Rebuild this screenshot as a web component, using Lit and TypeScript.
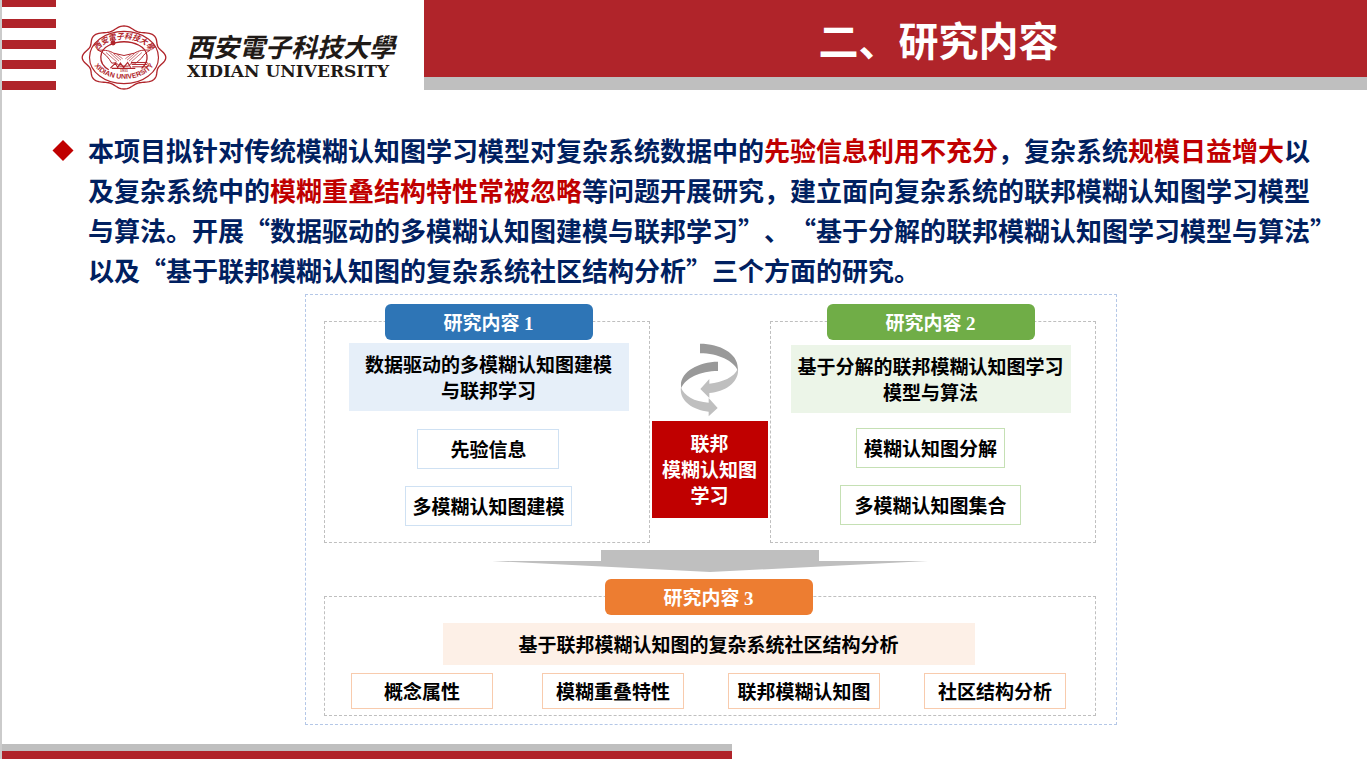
import { LitElement, html, css } from "lit";
import { customElement, property } from "lit/decorators.js";

const CJK = css`"Noto Sans CJK SC", sans-serif`;

/** Eight-lobed outline of the university seal. */
function sealOutline(cx: number, cy: number, rx: number, ry: number): string {
  const points: string[] = [];
  for (let i = 0; i < 160; i++) {
    const a = (i / 160) * Math.PI * 2;
    const f = 0.94 + 0.06 * Math.cos(8 * a);
    points.push(`${(cx + rx * f * Math.cos(a)).toFixed(1)} ${(cy + ry * f * Math.sin(a)).toFixed(1)}`);
  }
  return `M${points.join("L")}Z`;
}

@customElement("university-logo")
export class UniversityLogo extends LitElement {
  static styles = css`
    :host {
      display: flex;
      align-items: flex-end;
      gap: 20px;
    }
    .seal {
      width: 86px;
      height: 65px;
      flex: none;
    }
    .seal-cn {
      font: italic 700 23px ${CJK};
      fill: #b0242a;
    }
    .seal-en {
      font: 700 21px "Liberation Sans", sans-serif;
      fill: #b0242a;
    }
    .seal-year {
      font: 700 12px "Liberation Serif", serif;
      fill: #b0242a;
    }
    .names {
      display: flex;
      flex-direction: column;
      padding-bottom: 10px;
      color: #1f1a17;
      white-space: nowrap;
    }
    .cn {
      font: italic 700 26px/32px ${CJK};
    }
    .en {
      font: 700 17px/18px "DejaVu Serif", serif;
    }
  `;

  render() {
    return html`
      <svg class="seal" viewBox="242 75 258 196" role="img" aria-label="西安电子科技大学校徽">
        <g fill="none" stroke="#b0242a" stroke-width="4">
          <path d=${sealOutline(371, 173, 126, 95)} />
          <ellipse cx="371" cy="173" rx="104" ry="79" stroke-width="3.5" />
          <path d="M325 210C290 190 296 150 326 136C352 122 390 122 416 136C444 150 450 182 424 206" stroke-width="4" />
          <path d="M293 151C315 150 329 153 340 160L371 167L402 160C414 152 430 149 450 151C438 157 430 165 424 175L407 190L395 189L384 199H358L347 189L334 190C326 175 312 158 293 151Z" stroke-width="3" />
          <path d="M317 158L349 186M327 157L356 184M339 161L362 181M349 163L367 177M425 158L393 186M415 157L386 184M403 161L380 181M393 163L375 177" stroke-width="2" />
          <path d="M330 205L345 190L352 203L360 190L370 203L382 188L391 203M334 206H405" stroke-width="3.5" />
          <path d="M392 188H440M394 194H440M396 201H442M438 186C446 191 446 199 439 204" stroke-width="3" />
        </g>
        <circle cx="338" cy="129" r="7.5" fill="#b0242a" />
        <defs>
          <path id="upper" d="M286 174A85 57 0 0 1 456 174" />
          <path id="lower" d="M274 180A98 67 0 0 0 468 180" />
        </defs>
        <text class="seal-cn"><textPath href="#upper" startOffset="50%" text-anchor="middle">西安電子科技大學</textPath></text>
        <text class="seal-en"><textPath href="#lower" startOffset="50%" text-anchor="middle">XIDIAN UNIVERSITY</textPath></text>
        <text class="seal-year" x="371" y="218" text-anchor="middle">1931</text>
      </svg>
      <div class="names">
        <span class="cn">西安電子科技大學</span>
        <span class="en">XIDIAN UNIVERSITY</span>
      </div>
    `;
  }
}

@customElement("research-panel")
export class ResearchPanel extends LitElement {
  @property() number = "";
  @property({ attribute: false }) summary: string[] = [];
  @property({ attribute: false }) topics: string[] = [];

  static styles = css`
    :host {
      display: flex;
      flex-direction: column;
      align-items: center;
      box-sizing: border-box;
      border: 1px dashed #bfbfbf;
      color: #000;
      font: 700 19px/26px ${CJK};
      text-align: center;
      white-space: nowrap;
    }
    .tab {
      box-sizing: border-box;
      width: 208px;
      margin: -18px 0 0;
      padding: 5px 0;
      border-radius: 6px;
      background: var(--accent);
      color: #fff;
      font: inherit;
    }
    .digit {
      font-family: "Liberation Serif", serif;
      line-height: 1;
    }
    .summary {
      box-sizing: border-box;
      width: var(--summary-width, 280px);
      margin: var(--summary-gap) 0 var(--topics-gap);
      padding: 8px 0;
      background: var(--tint);
    }
    .topics {
      display: flex;
      flex-direction: column;
      align-items: center;
      gap: 17px;
      margin: 0;
      padding: 0;
      list-style: none;
    }
    .topic {
      box-sizing: border-box;
      min-width: 142px;
      padding: 6px;
      border: 1px solid var(--line);
    }
    :host([wide]) .topics {
      display: grid;
      grid-template-columns: repeat(4, 1fr);
      justify-items: center;
      align-self: stretch;
      gap: 0;
    }
    :host([wide]) .topic {
      padding: 4px 8px;
    }
    :host([roomy]) .topic {
      padding: 6px 7px;
    }
    :host([roomy]) .topic:last-child {
      padding: 6px 13px;
    }
  `;

  render() {
    return html`
      <h2 class="tab">研究内容 <span class="digit">${this.number}</span></h2>
      <div class="summary">${this.summary.map((line) => html`<div>${line}</div>`)}</div>
      <ul class="topics">
        ${this.topics.map((topic) => html`<li class="topic">${topic}</li>`)}
      </ul>
    `;
  }
}

@customElement("app-root")
export class AppRoot extends LitElement {
  static styles = css`
    :host {
      display: flex;
      flex-direction: column;
      box-sizing: border-box;
      min-height: 100vh;
      border-left: 2px solid #cbcbcb;
      background: #fff;
      font-family: ${CJK};
    }
    .header {
      display: grid;
      grid-template-columns: 422px 1fr;
      height: 90px;
    }
    .brand {
      display: flex;
      align-items: flex-end;
      gap: 25px;
    }
    .stripes {
      display: flex;
      flex-direction: column;
      justify-content: space-between;
      align-self: stretch;
      width: 54px;
    }
    .stripe {
      height: 9px;
      background: #b0242a;
    }
    .stripe:first-child {
      height: 7px;
    }
    .banner {
      box-sizing: border-box;
      border-bottom: 13px solid #bfbfbf;
      padding: 11px 0 0 86px;
      background: #b0242a;
    }
    .title {
      margin: 0;
      color: #fff;
      font: 700 40px/56px ${CJK};
      text-align: center;
    }
    .main {
      flex: 1;
      padding: 40px 0 19px;
    }
    .intro {
      display: flex;
      gap: 14px;
      padding-left: 50px;
    }
    .bullet {
      flex: none;
      width: 22px;
      height: 40px;
      fill: #c00000;
    }
    .statement {
      margin: 0;
      color: #002060;
      font: 700 26px/40px ${CJK};
      text-spacing-trim: space-all;
      white-space: nowrap;
    }
    .line {
      display: block;
    }
    .hot {
      color: #c00000;
    }
    .diagram {
      display: flex;
      flex-direction: column;
      box-sizing: border-box;
      max-width: 812px;
      margin: 4px auto 0;
      padding: 26px 20px 8px 18px;
      border: 1px dashed #b4c7e7;
    }
    .stage {
      padding-left: 52px;
    }
    .row {
      display: grid;
      grid-template-columns: 1fr 120px 1fr;
    }
    .first {
      --accent: #2e75b6;
      --tint: #e6eff9;
      --line: #cfe1f3;
      --summary-gap: 3px;
      --topics-gap: 18px;
      padding: 0 0 16px 4px;
    }
    .second {
      --accent: #70ad47;
      --tint: #ecf5e8;
      --line: #c5e0b4;
      --summary-gap: 5px;
      --topics-gap: 15px;
      padding: 0 4px 16px 0;
    }
    .third {
      --accent: #ed7d31;
      --tint: #fdf0e7;
      --line: #f8cbad;
      --summary-gap: 8px;
      --topics-gap: 8px;
      --summary-width: 532px;
      margin-top: 24px;
      padding: 0 4px 6px 2px;
    }
    .hub {
      display: flex;
      flex-direction: column;
      align-items: center;
      gap: 4px;
      padding-top: 22px;
    }
    .cycle {
      width: 59px;
      height: 74px;
    }
    .core {
      box-sizing: border-box;
      width: 116px;
      padding: 9px 0 10px;
      background: #c00000;
      color: #fff;
      font: 700 19px/26px ${CJK};
      text-align: center;
    }
    .down {
      align-self: center;
      width: 436px;
      height: 22px;
      margin-top: 7px;
      fill: #bfbfbf;
    }
    .footer {
      width: 730px;
      max-width: 100%;
      height: 8px;
      border-top: 7px solid #bfbfbf;
      background: #b0242a;
    }
  `;

  render() {
    return html`
      <header class="header">
        <div class="brand">
          <div class="stripes">${[0, 1, 2, 3, 4].map(() => html`<div class="stripe"></div>`)}</div>
          <university-logo></university-logo>
        </div>
        <div class="banner"><h1 class="title">二、研究内容</h1></div>
      </header>
      <main class="main">
        <div class="intro">
          <svg class="bullet" viewBox="0 0 22 40" aria-hidden="true"><path d="M11 10L21.5 20.5L11 31L0.5 20.5Z" /></svg>
          <p class="statement">
            <span class="line">本项目拟针对传统模糊认知图学习模型对复杂系统数据中的<span class="hot">先验信息利用不充分</span>，复杂系统<span class="hot">规模日益增大</span>以</span>
            <span class="line">及复杂系统中的<span class="hot">模糊重叠结构特性常被忽略</span>等问题开展研究，建立面向复杂系统的联邦模糊认知图学习模型</span>
            <span class="line">与算法。开展“数据驱动的多模糊认知图建模与联邦学习”、“基于分解的联邦模糊认知图学习模型与算法”</span>
            <span class="line">以及“基于联邦模糊认知图的复杂系统社区结构分析”三个方面的研究。</span>
          </p>
        </div>
        <div class="stage">
          <div class="diagram">
            <div class="row">
              <research-panel
                class="first"
                number="1"
                .summary=${["数据驱动的多模糊认知图建模", "与联邦学习"]}
                .topics=${["先验信息", "多模糊认知图建模"]}
              ></research-panel>
              <div class="hub">
                <svg class="cycle" viewBox="129 70 177 222" aria-hidden="true">
                  <g fill="#bfbfbf">
                    <path d="M303 146C307 188 265 216 217 220V235L190 208L217 178V192C256 188 292 174 303 146Z" />
                    <path d="M132 203C140 228 172 247 215 249V235L242 265L215 290V276C162 270 126 240 132 203Z" />
                  </g>
                  <g fill="#999">
                    <path d="M189 72C252 72 308 104 302 152C290 124 244 101 189 101Z" />
                    <path d="M243 126V154C190 154 145 176 133 205C123 162 180 126 243 126Z" />
                  </g>
                </svg>
                <div class="core">
                  <div>联邦</div>
                  <div>模糊认知图</div>
                  <div>学习</div>
                </div>
              </div>
              <research-panel
                class="second"
                roomy
                number="2"
                .summary=${["基于分解的联邦模糊认知图学习", "模型与算法"]}
                .topics=${["模糊认知图分解", "多模糊认知图集合"]}
              ></research-panel>
            </div>
            <svg class="down" viewBox="0 0 436 22" aria-hidden="true">
              <path d="M109 0H327V11H436L218 22L0 11H109Z" />
            </svg>
            <research-panel
              class="third"
              wide
              number="3"
              .summary=${["基于联邦模糊认知图的复杂系统社区结构分析"]}
              .topics=${["概念属性", "模糊重叠特性", "联邦模糊认知图", "社区结构分析"]}
            ></research-panel>
          </div>
        </div>
      </main>
      <footer class="footer"></footer>
    `;
  }
}
